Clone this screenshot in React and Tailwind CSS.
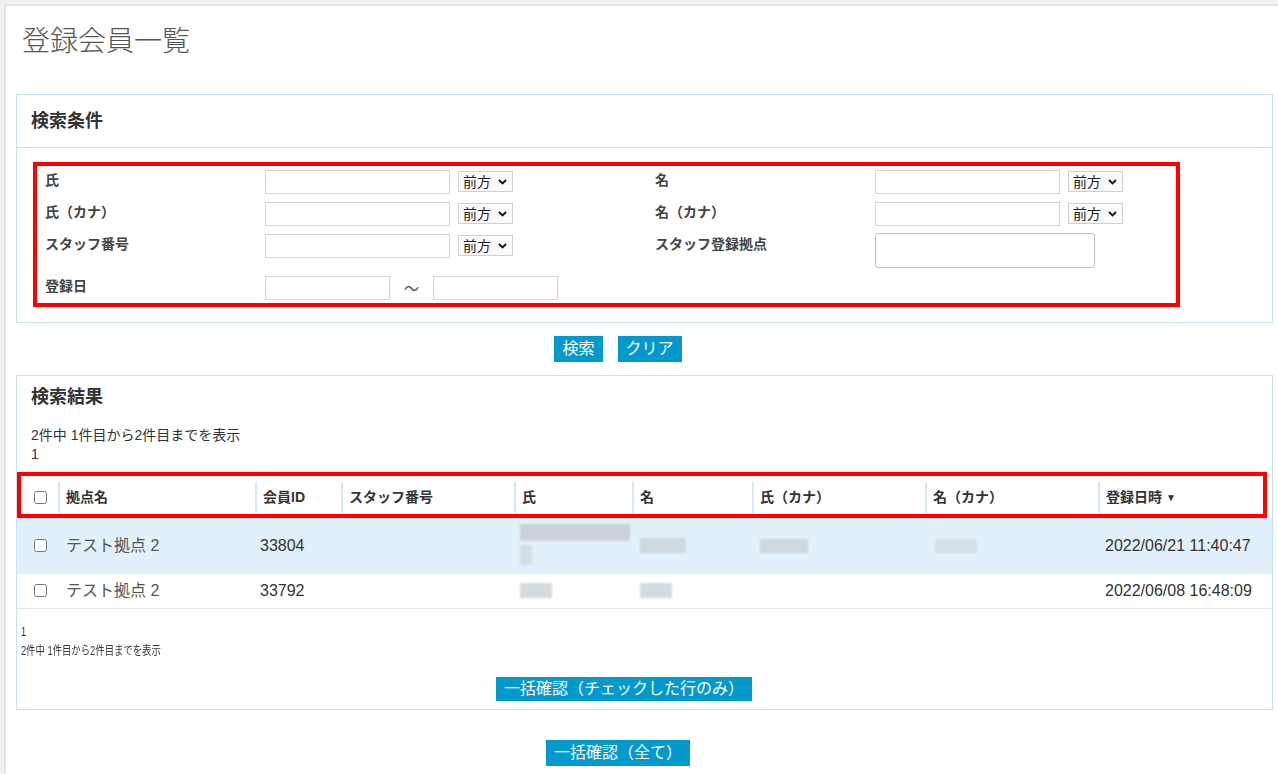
import React from 'react';

// 登録会員一覧 — search form + result table
const FONT = "font-['Liberation_Sans','Noto_Sans_CJK_JP',sans-serif]";

const TextBox = ({ wide = true }) => (
  <div className={`h-[24px] border border-[#d3d3d3] bg-white ${wide ? 'w-[185px]' : 'w-[125px]'}`} />
);

const MatchSelect = () => (
  <div className="mt-px flex h-[21px] w-[55px] items-center justify-between border border-[#cfcfcf] bg-[#fafafa] pl-[4px] pr-[5px] text-[14px] leading-none text-[#222]">
    <span>前方</span>
    <svg width="9" height="6" viewBox="0 0 9 6">
      <path d="M1 1l3.5 3.5L8 1" fill="none" stroke="#111" strokeWidth="1.8" />
    </svg>
  </div>
);

const Field = ({ label, children }) => (
  <div className="flex items-start">
    <div className="w-[220px] text-[14px] font-bold leading-5 text-[#444]">{label}</div>
    <div className="flex items-start gap-2">{children}</div>
  </div>
);

const Btn = ({ children, className = '' }) => (
  <button className={`bg-[#0399cd] px-2 text-[16px] text-white ${className}`}>{children}</button>
);

const Check = () => <input type="checkbox" readOnly className="m-0 h-[13px] w-[13px]" />;

const COLS = 'grid grid-cols-[41px_197px_86px_173px_118px_120px_173px_173px_1fr]';

const headers = ['拠点名', '会員ID', 'スタッフ番号', '氏', '名', '氏（カナ）', '名（カナ）'];

// masked personal data
const Blob = ({ className }) => <div className={`bg-[#cbd1d9] blur-[1px] ${className}`} />;

const rows = [
  {
    base: 'テスト拠点 2',
    id: '33804',
    date: '2022/06/21 11:40:47',
    tall: true,
  },
  {
    base: 'テスト拠点 2',
    id: '33792',
    date: '2022/06/08 16:48:09',
    tall: false,
  },
];

function ResultRow({ row }) {
  return (
    <div
      className={`${COLS} text-[16px] ${
        row.tall ? 'h-[56px] bg-[#e1f0fb]' : 'h-[35px] border-b border-[#e3e3e3] bg-white'
      }`}
    >
      <div className="flex items-center pl-[17px]">
        <Check />
      </div>
      <div className="flex items-center pl-[8px] text-[#555]">{row.base}</div>
      <div className="flex items-center pl-[5px] text-[#333]">{row.id}</div>
      <div />
      {row.tall ? (
        <div className="flex flex-col gap-[4px] pl-[6px] pt-[6px]">
          <Blob className="h-[17px] w-[110px]" />
          <Blob className="h-[20px] w-[12px] opacity-60" />
        </div>
      ) : (
        <div className="flex items-center pl-[6px]">
          <Blob className="h-[15px] w-[32px] opacity-80" />
        </div>
      )}
      <div className="flex items-center pl-[8px]">
        <Blob className={`h-[15px] opacity-80 ${row.tall ? 'w-[46px]' : 'w-[32px]'}`} />
      </div>
      <div className="flex items-center pl-[8px]">
        {row.tall && <Blob className="h-[14px] w-[48px] opacity-80" />}
      </div>
      <div className="flex items-center pl-[10px]">
        {row.tall && <Blob className="h-[14px] w-[42px] opacity-50" />}
      </div>
      <div className="flex items-center pl-[7px] text-[#333]">{row.date}</div>
    </div>
  );
}

export default function App() {
  return (
    <div className={`min-h-screen bg-[#f0efeb] pl-1 pt-1 ${FONT}`}>
      <div className="min-h-[770px] border-l-2 border-t-2 border-[#d4e6f7] bg-white pb-2 pl-[10px] pr-[5px]">
        <h1 className="pl-[6px] pt-[18px] text-[28px] font-light leading-[36px] text-[#555]">登録会員一覧</h1>

        {/* search conditions */}
        <section className="mt-[34px] border border-[#c9e0f5]">
          <div className="flex h-[53px] items-center border-b border-[#c9e0f5] pl-[14px] text-[18px] font-bold text-[#333]">
            検索条件
          </div>
          <div className="relative pb-[21px] pl-[28px] pt-[22px]">
            <div className="grid grid-cols-[610px_1fr] gap-y-2">
              <Field label="氏">
                <TextBox />
                <MatchSelect />
              </Field>
              <Field label="名">
                <TextBox />
                <MatchSelect />
              </Field>
              <Field label="氏（カナ）">
                <TextBox />
                <MatchSelect />
              </Field>
              <Field label="名（カナ）">
                <TextBox />
                <MatchSelect />
              </Field>
              <Field label="スタッフ番号">
                <TextBox />
                <MatchSelect />
              </Field>
              <Field label="スタッフ登録拠点">
                <div className="-mt-px h-[35px] w-[220px] rounded-[3px] border border-[#bdbdbd] bg-white" />
              </Field>
              <Field label="登録日">
                <div className="flex items-start">
                  <TextBox wide={false} />
                  <span className="w-[43px] pt-[2px] text-center text-[15px] text-[#555]">～</span>
                  <TextBox wide={false} />
                </div>
              </Field>
              <div />
            </div>
            <div className="pointer-events-none absolute bottom-[15px] left-[16px] right-[92px] top-[14px] border-4 border-[#ff0000]" />
          </div>
        </section>

        <div className="mt-[13px] flex h-[26px] justify-center gap-[15px] pr-[53px]">
          <Btn className="h-[26px]">検索</Btn>
          <Btn className="h-[26px]">クリア</Btn>
        </div>

        {/* results */}
        <section className="mt-[13px] border border-[#c9e0f5] pb-[8px] pt-[9px]">
          <h2 className="pl-[14px] text-[18px] font-bold leading-6 text-[#333]">検索結果</h2>
          <div className="mt-[17px] pl-[14px] text-[14px] leading-[19px] text-[#333]">
            <p>2件中 1件目から2件目までを表示</p>
            <p>1</p>
          </div>

          <div className="mt-[8px]">
            <div className={`relative h-[46px] pb-[5px] pt-[10px] ${COLS}`}>
              <div className="flex items-center pl-[17px]">
                <Check />
              </div>
              {headers.map((h) => (
                <div
                  key={h}
                  className="flex items-center border-l-2 border-[#d6e7f6] pl-[6px] text-[14px] font-bold text-[#333]"
                >
                  {h}
                </div>
              ))}
              <div className="flex items-center gap-1 border-l-2 border-[#d6e7f6] pl-[6px] text-[14px] font-bold text-[#333]">
                登録日時 <span className="text-[10px]">▼</span>
              </div>
              <div className="pointer-events-none absolute inset-y-0 left-0 right-[5px] border-4 border-[#ff0000]" />
            </div>
            {rows.map((r) => (
              <ResultRow key={r.id} row={r} />
            ))}
          </div>

          <div className="mt-[14px] origin-left scale-x-[0.78] pl-[5px] text-[12px] leading-[19px] text-[#333]">
            <p>1</p>
            <p>2件中 1件目から2件目までを表示</p>
          </div>
          <div className="mt-[16px] flex justify-center pr-[41px]">
            <Btn className="h-[24px]">一括確認（チェックした行のみ）</Btn>
          </div>
        </section>

        <div className="mt-[30px] flex justify-center pr-[53px]">
          <Btn className="h-[26px]">一括確認（全て）</Btn>
        </div>
      </div>
    </div>
  );
}
